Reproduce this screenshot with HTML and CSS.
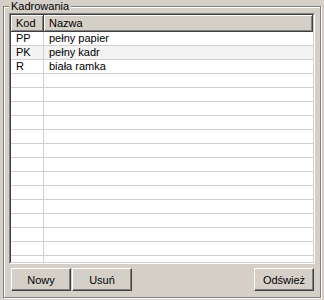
FILE: index.html
```html
<!DOCTYPE html>
<html lang="pl">
<head>
  <meta charset="UTF-8" />
  <title>Kadrowania</title>
  <link rel="stylesheet" href="styles.css">
</head>
<body>
  <fieldset class="group">
    <legend>Kadrowania</legend>
    <div class="group-body">
      <div class="listview">
        <div class="listview-inner">
          <div class="lv-head">
            <div class="hcell kod">Kod</div>
            <div class="hcell nazwa">Nazwa</div>
          </div>
          <div class="lv-rows" id="rows">
            <div class="row"><div class="cell kod">PP</div><div class="cell nazwa">pełny papier</div></div>
            <div class="row alt"><div class="cell kod">PK</div><div class="cell nazwa">pełny kadr</div></div>
            <div class="row"><div class="cell kod">R</div><div class="cell nazwa">biała ramka</div></div>
          </div>
        </div>
      </div>
      <div class="buttons">
        <button class="btn">Nowy</button>
        <button class="btn">Usuń</button>
        <span class="spacer"></span>
        <button class="btn">Odśwież</button>
      </div>
    </div>
  </fieldset>

  <script>
    // fill the rest of the list with empty grid rows
    const rows = document.getElementById("rows");
    for (let i = 0; i < 15; i++) {
      const row = document.createElement("div");
      row.className = "row";
      row.innerHTML = '<div class="cell kod"></div><div class="cell nazwa"></div>';
      rows.appendChild(row);
    }
  </script>
</body>
</html>
```

FILE: styles.css
```css
* {
  box-sizing: border-box;
}
html, body {
  margin: 0;
  padding: 0;
}
body {
  width: 324px;
  height: 300px;
  background: #d4d0c8;
  font-family: "Liberation Sans", Arial, sans-serif;
  font-size: 11px;
  color: #000;
  overflow: hidden;
}
.group {
  height: 298px;
  margin: 0 3px 2px 3px;
  padding: 0 5px 6px 5px;
  min-width: 0;
  border: 1px solid #808080;
  box-shadow: inset 1px 1px 0 #fff, 1px 1px 0 #fff;
}
.group legend {
  margin-left: 0;
  padding: 0 2px;
  line-height: 13px;
  height: 13px;
  background: #d4d0c8;
}
.group-body {
  display: flex;
  flex-direction: column;
  gap: 4px;
}
.listview {
  height: 251px;
  border: 1px solid;
  border-color: #808080 #fff #fff #808080;
}
.listview-inner {
  height: 100%;
  border: 1px solid;
  border-color: #404040 #d4d0c8 #d4d0c8 #404040;
  background: #fff;
  overflow: hidden;
}
.lv-head {
  display: flex;
  height: 17px;
}
.hcell {
  height: 17px;
  line-height: 16px;
  padding-left: 5px;
  background: #d4d0c8;
  border-right: 1px solid #404040;
  border-bottom: 1px solid #404040;
  box-shadow: inset 1px 1px 0 #fff, inset -1px -1px 0 #808080;
  white-space: nowrap;
}
.kod {
  width: 33px;
  flex: none;
}
.nazwa {
  flex: 1;
}
.row {
  display: flex;
  height: 14px;
  border-bottom: 1px solid #d4d0c8;
}
.row.alt {
  background: #f3f3f3;
}
.cell {
  line-height: 13px;
  padding-left: 5px;
  white-space: nowrap;
}
.cell.kod {
  border-right: 1px solid #d4d0c8;
}
.buttons {
  display: flex;
  gap: 1px;
  padding: 0 1px 0 2px;
  height: 23px;
}
.spacer {
  flex: 1;
}
.btn {
  width: 60px;
  height: 23px;
  padding: 0;
  font-family: inherit;
  font-size: 11px;
  color: #000;
  background: #d4d0c8;
  border: 1px solid;
  border-color: #fff #404040 #404040 #fff;
  box-shadow: inset -1px -1px 0 #808080;
  border-radius: 0;
}
```
